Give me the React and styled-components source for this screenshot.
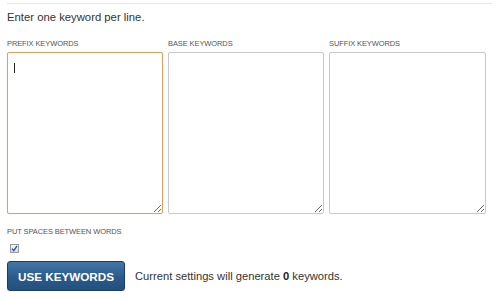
import React, { useState } from 'react';
import styled, { createGlobalStyle } from 'styled-components';

const GlobalStyle = createGlobalStyle`
  html, body {
    margin: 0;
    padding: 0;
    background: #fff;
    font-family: Arial, "Liberation Sans", sans-serif;
  }
`;

const Wrapper = styled.div`
  margin: 3px 8px 0 7px;
  border-top: 1px solid #e6e6e6;
  padding-top: 6px;
  color: #333;
`;

const Intro = styled.p`
  margin: 0 0 15px;
  font-size: 11.3px;
  line-height: 14px;
`;

const Columns = styled.div`
  display: grid;
  grid-template-columns: 156px 156px 157px;
  column-gap: 5px;
`;

const Column = styled.div`
  position: relative;
  display: flex;
  flex-direction: column;
`;

const Label = styled.label`
  font-size: 7.5px;
  line-height: 10px;
  text-transform: uppercase;
  color: #555;
  margin-bottom: 3px;
  letter-spacing: -0.1px;
`;

const Area = styled.textarea`
  box-sizing: border-box;
  width: 100%;
  height: 162px;
  margin: 0;
  padding: 6px 7px;
  font-family: Arial, "Liberation Sans", sans-serif;
  font-size: 13px;
  color: #333;
  border: 1px solid ${p => (p.$active ? '#e0a060' : '#c8c8c8')};
  border-radius: 2px;
  resize: vertical;
  outline: none;
  box-shadow: ${p => (p.$active ? '0 0 1px rgba(224,160,96,0.5)' : 'none')};
`;

const Caret = styled.span`
  position: absolute;
  left: 7px;
  top: 24px;
  width: 1px;
  height: 10px;
  background: #222;
  pointer-events: none;
`;

const Option = styled.div`
  margin-top: 13px;
  display: flex;
  flex-direction: column;
  gap: 4px;
`;

const Check = styled.span`
  margin-left: 3px;
  width: 9px;
  height: 9px;
  box-sizing: border-box;
  border: 1px solid #9a9a9a;
  background: linear-gradient(#f4f4f4, #dcdcdc);
  display: flex;
  align-items: center;
  justify-content: center;
`;

const Footer = styled.div`
  margin-top: 8px;
  display: flex;
  align-items: center;
  gap: 10px;
`;

const Button = styled.button`
  box-sizing: border-box;
  width: 118px;
  height: 30px;
  border: 1px solid #1d3f63;
  border-radius: 3px;
  background: linear-gradient(#4276a8, #2b5a8a 55%, #23507e);
  color: #fff;
  font-family: Arial, "Liberation Sans", sans-serif;
  font-weight: bold;
  font-size: 11.7px;
  padding: 0;
  box-shadow: 0 1px 1px rgba(0, 0, 0, 0.25);
  cursor: pointer;
`;

const Summary = styled.span`
  font-size: 11.2px;
  color: #333;

  strong {
    color: #222;
  }
`;

const fields = [
  { id: 'prefix', label: 'Prefix keywords' },
  { id: 'base', label: 'Base keywords' },
  { id: 'suffix', label: 'Suffix keywords' },
];

export default function App() {
  const [values, setValues] = useState({ prefix: '', base: '', suffix: '' });

  return (
    <Wrapper>
      <GlobalStyle />
      <Intro>Enter one keyword per line.</Intro>
      <Columns>
        {fields.map(f => (
          <Column key={f.id}>
            <Label htmlFor={f.id}>{f.label}</Label>
            <Area
              id={f.id}
              $active={f.id === 'prefix'}
              value={values[f.id]}
              onChange={e => setValues({ ...values, [f.id]: e.target.value })}
            />
            {f.id === 'prefix' && !values.prefix && <Caret />}
          </Column>
        ))}
      </Columns>
      <Option>
        <Label as="span">Put spaces between words</Label>
        <Check>
          <svg width="7" height="7" viewBox="0 0 7 7">
            <path d="M1 3.6 L2.8 5.6 L6 0.8" fill="none" stroke="#2a4fa0" strokeWidth="1.3" />
          </svg>
        </Check>
      </Option>
      <Footer>
        <Button>USE KEYWORDS</Button>
        <Summary>
          Current settings will generate <strong>0</strong> keywords.
        </Summary>
      </Footer>
    </Wrapper>
  );
}
